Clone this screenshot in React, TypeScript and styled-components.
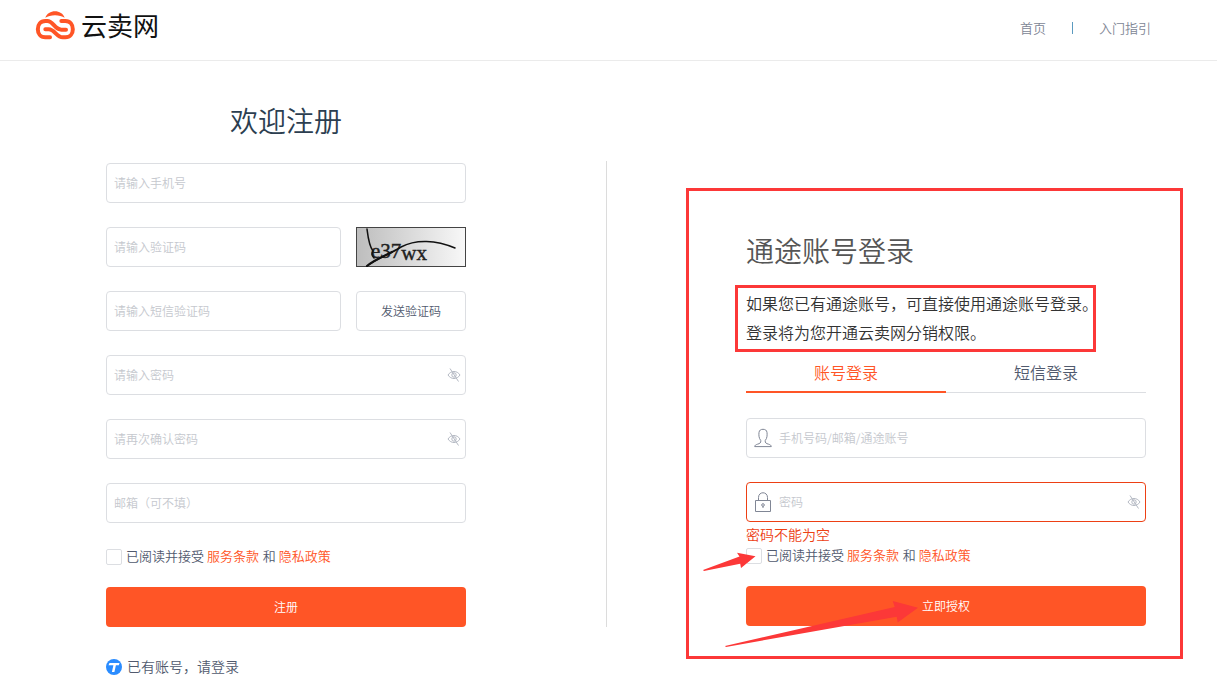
import React, { useId, useState } from "react";
import styled, { createGlobalStyle } from "styled-components";

const color = {
  brand: "#ff5526",
  error: "#ed4014",
  mark: "#fc3838",
  border: "#dcdee2",
  text: "#515a6e",
  hint: "#c5c8ce",
};

const GlobalStyle = createGlobalStyle`
  *, *::before, *::after { box-sizing: border-box; }
  body {
    margin: 0;
    background: #fff;
    color: ${color.text};
    font-family: "Noto Sans CJK SC", sans-serif;
    font-size: 14px;
    font-weight: 350;
    line-height: 20px;
  }
  button, input { font-family: inherit; font-weight: inherit; }
  a { color: inherit; text-decoration: none; }
`;

const Header = styled.header`
  display: flex;
  align-items: flex-start;
  justify-content: space-between;
  height: 61px;
  padding: 0 66px 0 35px;
  border-bottom: 1px solid #ebebeb;
`;

const Brand = styled.a`
  display: flex;
  align-items: center;
  gap: 4px;
  height: 52px;
  color: #111;
  font-size: 26px;
  font-weight: 400;
  line-height: 40px;
`;

const BrandName = styled.span`
  padding-bottom: 2px;
`;

const Nav = styled.nav`
  display: flex;
  align-items: center;
  gap: 25px;
  height: 56px;
  color: #808695;
  font-size: 13px;
`;

const NavRule = styled.span`
  width: 1px;
  height: 12px;
  margin: 0 1px;
  background: #5b9abf;
`;

const Columns = styled.main`
  display: grid;
  grid-template-columns: 360fr 140px 1px 79px 497fr;
  align-items: start;
  padding: 39px 34px 0 106px;
`;

const Register = styled.form`
  display: flex;
  flex-direction: column;
`;

const Divider = styled.div`
  grid-column: 3;
  align-self: stretch;
  margin: 61px 0 50px;
  background: #dcdcdc;
`;

const Title = styled.h1`
  margin: 0 0 23px;
  color: #2c3e50;
  font-size: 28px;
  font-weight: 350;
  line-height: 40px;
  text-align: center;
`;

const Fields = styled.div`
  display: flex;
  flex-direction: column;
  gap: 24px;
`;

const FieldRow = styled.div`
  display: grid;
  grid-template-columns: 1fr 110px;
  gap: 15px;
`;

const Box = styled.div<{ $invalid?: boolean }>`
  display: flex;
  align-items: center;
  height: 40px;
  padding: 0 4px 0 7px;
  border: 1px solid ${(p) => (p.$invalid ? color.error : color.border)};
  border-radius: 4px;
  background: #fff;
`;

const Entry = styled.input<{ $iconed?: boolean }>`
  flex: 1;
  min-width: 0;
  height: 36px;
  padding: 0 0 2px;
  margin-left: ${(p) => (p.$iconed ? "7px" : "0")};
  border: 0;
  outline: 0;
  background: transparent;
  color: ${color.text};
  font-size: 12px;
  &::placeholder { color: ${color.hint}; opacity: 1; }
`;

const EyeButton = styled.button`
  display: flex;
  padding: 0;
  border: 0;
  background: none;
  color: #b4b9c3;
  cursor: pointer;
`;

const CodeButton = styled.button`
  height: 40px;
  padding: 0 0 2px;
  border: 1px solid ${color.border};
  border-radius: 4px;
  background: #fff;
  color: ${color.text};
  font-size: 12px;
  cursor: pointer;
`;

const Submit = styled.button`
  width: 100%;
  height: 40px;
  margin-top: 20px;
  padding: 0 0 2px;
  border: 0;
  border-radius: 4px;
  background: ${color.brand};
  color: #fff;
  font-size: 12px;
  cursor: pointer;
`;

const AgreeRow = styled.div<{ $tight?: boolean }>`
  display: flex;
  align-items: center;
  gap: 4px;
  height: 20px;
  margin-top: ${(p) => (p.$tight ? "0" : "24px")};
  font-size: 13px;
`;

const AgreeLabel = styled.label`
  padding-bottom: 2px;
`;

const Tick = styled.input`
  appearance: none;
  width: 16px;
  height: 16px;
  margin: 0;
  border: 1px solid ${color.border};
  border-radius: 2px;
  background: #fff;
  &:checked { background: ${color.brand}; }
`;

const Term = styled.a`
  margin-right: 1px;
  color: ${color.brand};
`;

const LoginLink = styled.a`
  display: flex;
  align-items: center;
  gap: 5px;
  height: 20px;
  margin-top: 30px;
`;

const LoginText = styled.span`
  padding-bottom: 2px;
`;

const LoginPanel = styled.section`
  position: relative;
  grid-column: 5;
  margin-top: 88px;
  padding: 39px 34px 30px 57px;
  border: 3px solid ${color.mark};
`;

const LoginTitle = styled.h2`
  margin: 0 0 15px;
  color: #555;
  font-size: 28px;
  font-weight: 350;
  line-height: 40px;
`;

const Notice = styled.p`
  width: 361px;
  margin: 0 0 0 -11px;
  padding: 1px 0 2px 8px;
  border: 3px solid ${color.mark};
  color: #333;
  font-size: 16px;
  line-height: 29px;
  white-space: nowrap;
`;

const Tabs = styled.div`
  display: grid;
  grid-template-columns: 1fr 1fr;
  margin-bottom: 25px;
  box-shadow: inset 0 -1px ${color.border};
`;

const Tab = styled.button<{ $active?: boolean }>`
  height: 41px;
  padding: 0;
  border: 0;
  border-bottom: 2px solid ${(p) => (p.$active ? color.brand : "transparent")};
  background: none;
  color: ${(p) => (p.$active ? color.brand : color.text)};
  font-size: 16px;
  cursor: pointer;
`;

const ErrorText = styled.div`
  color: ${color.error};
  font-size: 14px;
  line-height: 24px;
`;

const Arrows = styled.svg`
  position: absolute;
  left: 14px;
  top: 359px;
  pointer-events: none;
`;

const Logo = () => (
  <svg width="42" height="32" viewBox="15 15 126 96" fill="none" stroke={color.brand} strokeWidth="12" aria-hidden="true">
    <path d="M46 38C54 12 96 12 104 38C90 28 60 28 46 38Z" fill={color.brand} stroke="none" />
    <path d="M60 97H46C16 97 16 48 46 48H52C70 48 74 74 94 74H108" strokeLinecap="round" />
    <path d="M94 48H106C136 48 136 97 106 97H98C80 97 74 73 56 73H46" strokeLinecap="round" />
  </svg>
);

const EyeOff = () => (
  <svg width="14" height="16" viewBox="0 0 14 16" fill="none" stroke="currentColor" aria-hidden="true">
    <path d="M1 8C4 3.300 10 3.300 13 8C10 12.700 4 12.700 1 8Z" />
    <circle cx="7" cy="8" r="2.200" />
    <path d="M3 1.500L11.500 14.500" />
  </svg>
);

const UserIcon = () => (
  <svg width="18" height="20" viewBox="0 0 18 20" fill="none" stroke="#808695" aria-hidden="true">
    <path d="M6.800 12.600C4.600 10 4.800 6.500 5 4.500C5.300 2.200 6.700 1.300 9 1.300C11.300 1.300 12.700 2.200 13 4.500C13.200 6.500 13.400 10 11.200 12.600C11 14.800 12 15.500 14.500 16.200C16.200 16.700 17.200 17.300 17.300 18.600H.7C.8 17.300 1.800 16.700 3.500 16.200C6 15.500 7 14.800 6.800 12.600Z" />
  </svg>
);

const LockIcon = () => (
  <svg width="18" height="20" viewBox="0 0 18 20" fill="none" stroke="#808695" aria-hidden="true">
    <path d="M1.500 8.500H16.500V19.500H1.500Z" />
    <path d="M4.500 8.500V5.500C4.500 -.8 13.500 -.8 13.500 5.500V8.500" />
    <circle cx="9" cy="13" r="1.300" />
    <path d="M9 14V16" />
  </svg>
);

const AccountBadge = () => (
  <svg width="16" height="16" viewBox="0 0 16 16" aria-hidden="true">
    <circle cx="8" cy="8" r="8" fill="#2a8cff" />
    <path d="M3.500 4H13.500L12.900 6.200H9.900L8.400 13H5.900L7.400 6.200H2.500Z" fill="#fff" />
  </svg>
);

const Captcha = () => (
  <svg width="110" height="40" viewBox="0 0 110 40" role="img" aria-label="图形验证码">
    <defs>
      <linearGradient id="captchaShade">
        <stop offset="0" stopColor="#bdbdbd" />
        <stop offset="1" stopColor="#f8f8f8" />
      </linearGradient>
    </defs>
    <rect x=".5" y=".5" width="109" height="39" fill="url(#captchaShade)" stroke="#444" />
    <text x="15" y="31" fill="#222" stroke="#222" strokeWidth=".4" fontFamily="Liberation Serif, serif" fontSize="21">
      e37<tspan dy="2">wx</tspan>
    </text>
    <g fill="none" stroke="#111" strokeLinecap="round">
      <path d="M11 2C12 10 13 19 17 24C15 27 17 30 18 31" strokeWidth="1.500" />
      <path d="M11 39C20 32 34 27 45 20C60 12 80 13 99 21" strokeWidth="1.500" />
      <path d="M11 39C18 33 26 30 36 25" strokeWidth="2.200" />
    </g>
  </svg>
);

type FieldProps = {
  label: string;
  secret?: boolean;
  icon?: React.ReactNode;
  invalid?: boolean;
};

const Field = ({ label, secret, icon, invalid }: FieldProps) => {
  const [shown, setShown] = useState(false);
  return (
    <Box $invalid={invalid}>
      {icon}
      <Entry
        $iconed={!!icon}
        type={secret && !shown ? "password" : "text"}
        placeholder={label}
        aria-label={label}
        aria-invalid={invalid}
      />
      {secret && (
        <EyeButton type="button" aria-label="显示密码" onClick={() => setShown(!shown)}>
          <EyeOff />
        </EyeButton>
      )}
    </Box>
  );
};

const Agreement = ({ tight }: { tight?: boolean }) => {
  const id = useId();
  return (
    <AgreeRow $tight={tight}>
      <Tick type="checkbox" id={id} />
      <AgreeLabel htmlFor={id}>
        已阅读并接受 <Term href="#terms">服务条款</Term> 和 <Term href="#privacy">隐私政策</Term>
      </AgreeLabel>
    </AgreeRow>
  );
};

export default function App() {
  return (
    <>
      <GlobalStyle />
      <Header>
        <Brand href="#home">
          <Logo />
          <BrandName>云卖网</BrandName>
        </Brand>
        <Nav>
          <a href="#home">首页</a>
          <NavRule />
          <a href="#guide">入门指引</a>
        </Nav>
      </Header>
      <Columns>
        <Register onSubmit={(e) => e.preventDefault()}>
          <Title>欢迎注册</Title>
          <Fields>
            <Field label="请输入手机号" />
            <FieldRow>
              <Field label="请输入验证码" />
              <Captcha />
            </FieldRow>
            <FieldRow>
              <Field label="请输入短信验证码" />
              <CodeButton type="button">发送验证码</CodeButton>
            </FieldRow>
            <Field label="请输入密码" secret />
            <Field label="请再次确认密码" secret />
            <Field label="邮箱（可不填）" />
          </Fields>
          <Agreement />
          <Submit type="submit">注册</Submit>
          <LoginLink href="#login">
            <AccountBadge />
            <LoginText>已有账号，请登录</LoginText>
          </LoginLink>
        </Register>
        <Divider />
        <LoginPanel>
          <LoginTitle>通途账号登录</LoginTitle>
          <Notice>
            如果您已有通途账号，可直接使用通途账号登录。
            <br />
            登录将为您开通云卖网分销权限。
          </Notice>
          <form onSubmit={(e) => e.preventDefault()}>
            <Tabs role="tablist">
              <Tab type="button" role="tab" aria-selected="true" $active>账号登录</Tab>
              <Tab type="button" role="tab" aria-selected="false">短信登录</Tab>
            </Tabs>
            <Fields>
              <Field label="手机号码/邮箱/通途账号" icon={<UserIcon />} />
              <Field label="密码" icon={<LockIcon />} secret invalid />
            </Fields>
            <ErrorText role="alert">密码不能为空</ErrorText>
            <Agreement tight />
            <Submit type="submit">立即授权</Submit>
          </form>
          <Arrows width="216" height="98" viewBox="703 550 216 98" fill={color.mark} aria-hidden="true">
            <path d="M703 570L739.500 556.500L737 552.700L755.500 556.300L741 568L740.200 563.700L704 571Z" />
            <path d="M725 646L894.700 607L892.700 601L918 607.700L897.700 622.500L896.700 616.700L726 647Z" />
          </Arrows>
        </LoginPanel>
      </Columns>
    </>
  );
}
